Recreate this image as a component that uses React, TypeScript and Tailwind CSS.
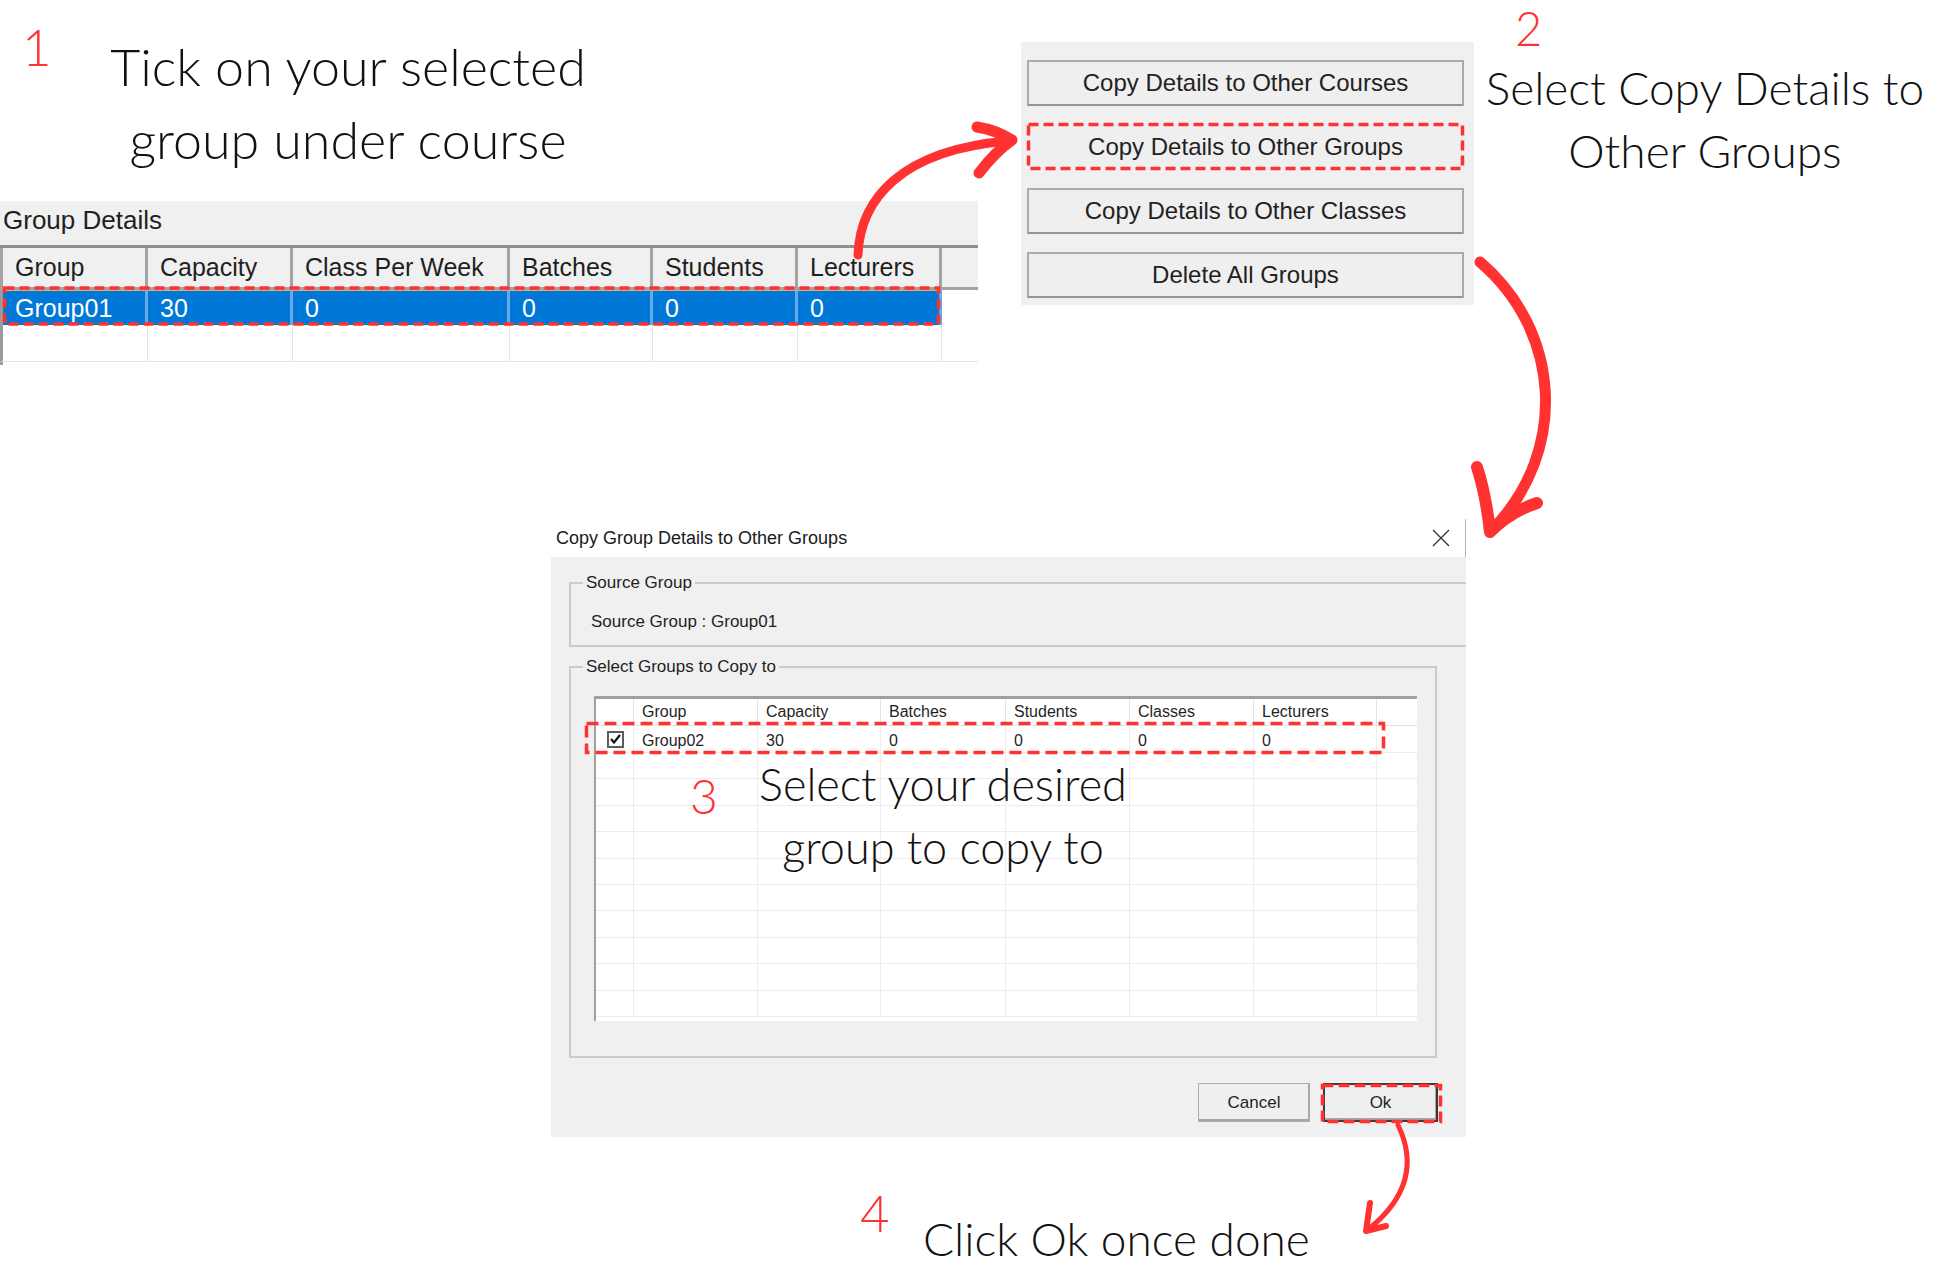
const caption = "font-['Lato',sans-serif] font-light text-[#111]"
const stepNo = "font-['Lato',sans-serif] font-light leading-none text-[#ff3131]"

const detailCols = [
  { label: 'Group', value: 'Group01', w: 'w-[148px] border-l-[3px]' },
  { label: 'Capacity', value: '30', w: 'w-[145px]' },
  { label: 'Class Per Week', value: '0', w: 'w-[217px]' },
  { label: 'Batches', value: '0', w: 'w-[143px]' },
  { label: 'Students', value: '0', w: 'w-[145px]' },
  { label: 'Lecturers', value: '0', w: 'w-[144px]' },
]

const copyCols = [
  { label: 'Group', value: 'Group02', w: 'w-[124px]' },
  { label: 'Capacity', value: '30', w: 'w-[123px]' },
  { label: 'Batches', value: '0', w: 'w-[125px]' },
  { label: 'Students', value: '0', w: 'w-[124px]' },
  { label: 'Classes', value: '0', w: 'w-[124px]' },
  { label: 'Lecturers', value: '0', w: 'w-[123px]' },
]

const actions = [
  'Copy Details to Other Courses',
  'Copy Details to Other Groups',
  'Copy Details to Other Classes',
  'Delete All Groups',
]

function GroupDetails() {
  return (
    <div className="absolute left-0 top-[201px] flex h-[164px] w-[978px] flex-col overflow-hidden bg-[#f0f0f0] text-[25px] text-[#1f1f1f]">
      <div className="h-[44px] shrink-0 pl-[3px] text-[26px] leading-[38px]">Group Details</div>
      <div className="flex h-[45px] shrink-0 border-y-[3px] border-t-[#8e8e8e] border-b-[#a3a3a3]">
        {detailCols.map((c) => (
          <div key={c.label} className={`${c.w} shrink-0 border-r-[3px] border-[#a3a3a3] pl-[12px] leading-[39px]`}>
            {c.label}
          </div>
        ))}
        <div className="flex-1" />
      </div>
      <div className="flex flex-1 flex-col bg-white">
        <div className="flex h-[35px] shrink-0">
          {detailCols.map((c) => (
            <div
              key={c.label}
              className={`${c.w} shrink-0 border-t border-r-[3px] border-t-[#e9a86a] border-r-[#6aa9e6] border-l-[#9c9c9c] bg-[#0078d7] pl-[12px] leading-[34px] text-white`}
            >
              {c.value}
            </div>
          ))}
          <div className="flex-1" />
        </div>
        <div className="flex h-[37px] shrink-0">
          {detailCols.map((c) => (
            <div key={c.label} className={`${c.w} shrink-0 border-r border-b border-[#e4e4e4] border-l-[#9c9c9c]`} />
          ))}
          <div className="flex-1 border-b border-[#e4e4e4]" />
        </div>
        <div className="flex flex-1">
          <div className="w-[3px] bg-[#9c9c9c]" />
        </div>
      </div>
    </div>
  )
}

function ActionButtons() {
  return (
    <div className="absolute left-[1021px] top-[42px] flex h-[263px] w-[453px] flex-col gap-[18px] bg-[#f0f0f0] pl-[6px] pt-[18px]">
      {actions.map((label, i) => (
        <button
          key={label}
          type="button"
          className={`h-[46px] w-[437px] shrink-0 border-2 bg-[#efefef] text-[24px] text-[#222] ${
            i === 1 ? 'border-[#efefef]' : 'border-[#ababab] border-b-[#969696]'
          }`}
        >
          {label}
        </button>
      ))}
    </div>
  )
}

function CopyDialog() {
  return (
    <div className="absolute left-[551px] top-[519px] flex h-[618px] w-[915px] flex-col">
      <div className="flex h-[38px] shrink-0 items-center justify-between border-r border-[#b5b5b5] bg-white pl-[5px] pr-[15px]">
        <span className="text-[18px] text-[#1a1a1a]">Copy Group Details to Other Groups</span>
        <svg width="18" height="18" viewBox="0 0 18 18" stroke="#333" strokeWidth="1.3">
          <path d="M1 1 L17 17 M17 1 L1 17" />
        </svg>
      </div>

      <div className="flex flex-1 flex-col overflow-hidden bg-[#f0f0f0] pl-[18px] text-[17px] text-[#1f1f1f]">
        <fieldset className="mt-[16px] h-[74px] w-[910px] shrink-0 border-2 border-[#cbcbcb]">
          <legend className="ml-[12px] px-[3px] leading-[20px]">Source Group</legend>
          <div className="pl-[20px] pt-[19px] leading-[20px]">Source Group : Group01</div>
        </fieldset>

        <fieldset className="mt-[10px] h-[401px] w-[868px] shrink-0 border-2 border-[#cbcbcb]">
          <legend className="ml-[12px] px-[3px] leading-[20px]">Select Groups to Copy to</legend>
          <div className="pl-[23px] pt-[19px]">
            <div className="flex h-[325px] w-[823px] flex-col overflow-hidden border-l-2 border-t-[3px] border-[#a0a0a0] bg-white text-[16px]">
              <div className="flex h-[27px] shrink-0 border-b border-[#e2e2e2]">
                <div className="w-[38px] shrink-0 border-r border-[#e2e2e2]" />
                {copyCols.map((c) => (
                  <div key={c.label} className={`${c.w} shrink-0 border-r border-[#e2e2e2] pl-[8px] leading-[26px]`}>
                    {c.label}
                  </div>
                ))}
                <div className="flex-1" />
              </div>
              <div className="flex h-[27px] shrink-0 border-b border-[#ececec]">
                <div className="flex w-[38px] shrink-0 items-center justify-center border-r border-[#ececec] pl-[2px]">
                  <div className="flex h-[17px] w-[17px] items-center justify-center border-2 border-[#5c5c5c] bg-white">
                    <svg width="11" height="10" viewBox="0 0 11 10" fill="none" stroke="#111" strokeWidth="2.2">
                      <path d="M1 5 L4 8.5 L10 1" />
                    </svg>
                  </div>
                </div>
                {copyCols.map((c) => (
                  <div key={c.label} className={`${c.w} shrink-0 border-r border-[#ececec] pl-[8px] pt-[3px] leading-[24px]`}>
                    {c.value}
                  </div>
                ))}
                <div className="flex-1" />
              </div>
              {Array.from({ length: 10 }).map((_, r) => (
                <div key={r} className="flex h-[26.4px] shrink-0 border-b border-[#ececec]">
                  <div className="w-[38px] shrink-0 border-r border-[#ececec]" />
                  {copyCols.map((c) => (
                    <div key={c.label} className={`${c.w} shrink-0 border-r border-[#ececec]`} />
                  ))}
                  <div className="flex-1" />
                </div>
              ))}
            </div>
          </div>
        </fieldset>

        <div className="mt-[25px] flex justify-end gap-[13px] pr-[28px]">
          <button
            type="button"
            className="h-[39px] w-[112px] border border-[#adadad] bg-[#efefef] text-[17px] shadow-[inset_-1px_-2px_0_#a5a5a5]"
          >
            Cancel
          </button>
          <button
            type="button"
            className="h-[39px] w-[115px] border-2 border-[#3a3a3a] bg-[#efefef] text-[17px] shadow-[inset_-1px_-2px_0_#a5a5a5]"
          >
            Ok
          </button>
        </div>
      </div>
    </div>
  )
}

function Annotations() {
  return (
    <svg
      className="pointer-events-none absolute left-0 top-0"
      width="1933"
      height="1277"
      viewBox="0 0 1933 1277"
      fill="none"
    >
      <g stroke="#ff3131" strokeLinecap="round" strokeLinejoin="round">
        <path d="M858 255 C860 200 900 150 1008 141" strokeWidth="9" />
        <path d="M977 127 Q996 130 1012 140 Q995 152 979 173" strokeWidth="11" />
        <path d="M1480 262 C1560 330 1570 450 1492 530" strokeWidth="11" />
        <path d="M1477 467 Q1486 495 1490 532 Q1510 512 1537 503" strokeWidth="12" />
        <path d="M1398 1125 C1415 1160 1410 1195 1370 1228" strokeWidth="5" />
        <path d="M1370 1203 L1366 1231 L1386 1226" strokeWidth="6" />
      </g>
      <g stroke="#ff3131" strokeWidth="3.5">
        <rect x="4.5" y="288" width="934" height="36" strokeDasharray="10 5" />
        <rect x="1028.5" y="124.5" width="434" height="44" strokeDasharray="10 5" />
        <rect x="586.5" y="723.5" width="797" height="29" strokeDasharray="12 6" />
        <rect x="1322.5" y="1085.5" width="118" height="36" strokeDasharray="11 5" />
      </g>
    </svg>
  )
}

export default function App() {
  return (
    <div className="relative h-[1277px] w-[1933px] overflow-hidden bg-white font-['Liberation_Sans',Arial,sans-serif]">
      <span className={`absolute left-[22px] top-[21px] text-[51px] ${stepNo}`}>1</span>
      <p className={`absolute left-[48px] top-[30px] w-[600px] text-center text-[52px] leading-[73px] ${caption}`}>
        Tick on your selected
        <br />
        group under course
      </p>

      <GroupDetails />
      <ActionButtons />

      <span className={`absolute left-[1515px] top-[5px] text-[47px] ${stepNo}`}>2</span>
      <p className={`absolute left-[1475px] top-[56px] w-[460px] text-center text-[46px] leading-[63px] ${caption}`}>
        Select Copy Details to
        <br />
        Other Groups
      </p>

      <CopyDialog />

      <span className={`absolute left-[690px] top-[772px] text-[48px] ${stepNo}`}>3</span>
      <p className={`absolute left-[693px] top-[753px] w-[500px] text-center text-[45px] leading-[63px] ${caption}`}>
        Select your desired
        <br />
        group to copy to
      </p>

      <span className={`absolute left-[860px] top-[1187px] text-[51px] ${stepNo}`}>4</span>
      <p className={`absolute left-[923px] top-[1216px] text-[46px] leading-none ${caption}`}>Click Ok once done</p>

      <Annotations />
    </div>
  )
}
